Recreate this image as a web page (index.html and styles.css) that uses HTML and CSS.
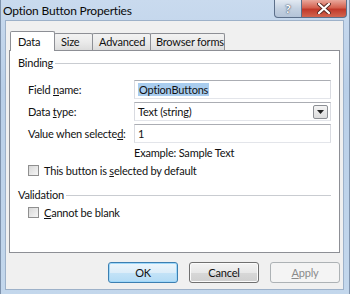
FILE: index.html
```html
<!doctype html>
<html lang="en">
<head>
	<meta charset="UTF-8">
	<title>Option Button Properties</title>
	<link rel="stylesheet" href="styles.css">
</head>
<body>
	<div class="window">
		<div class="titlebar">
			<span class="title">Option Button Properties</span>
			<div class="caption">
				<span class="cap-btn help">?</span>
				<span class="cap-btn close">
					<svg width="14" height="11" viewBox="0 0 14 11">
						<path d="M2 1 L12 10 M12 1 L2 10" stroke="#5a2a24" stroke-width="4" stroke-linecap="round"/>
						<path d="M2 1 L12 10 M12 1 L2 10" stroke="#fff" stroke-width="2.2" stroke-linecap="round"/>
					</svg>
				</span>
			</div>
		</div>
		<div class="client">
			<div class="tabs">
				<span class="tab active">Data</span>
				<span class="tab t-size">Size</span>
				<span class="tab t-adv">Advanced</span>
				<span class="tab t-browser">Browser forms</span>
			</div>
			<div class="panel">
				<div class="group"><span>Binding</span></div>
				<div class="fields">
					<label>Field <u>n</u>ame:</label>
					<div class="input"><span class="sel">OptionButtons</span></div>
					<label>Data <u>t</u>ype:</label>
					<div class="input select">
						<span>Text (string)</span>
						<span class="drop"><svg width="7" height="4" viewBox="0 0 7 4"><path d="M0 0 H7 L3.5 4 Z" fill="#222"/></svg></span>
					</div>
					<label>Value when selecte<u>d</u>:</label>
					<div class="input"><span>1</span></div>
				</div>
				<div class="example">Example: Sample Text</div>
				<div class="check first"><span class="box"></span><span>This button is <u>s</u>elected by default</span></div>
				<div class="group second"><span>Validation</span></div>
				<div class="check last"><span class="box"></span><span><u>C</u>annot be blank</span></div>
			</div>
			<div class="buttons">
				<span class="btn default">OK</span>
				<span class="btn">Cancel</span>
				<span class="btn disabled"><span><u>A</u>pply</span></span>
			</div>
		</div>
	</div>
</body>
</html>
```

FILE: styles.css
```css
* {
	margin: 0;
	padding: 0;
	box-sizing: border-box;
}
body {
	font-family: Lato, "Noto Sans", sans-serif;
	font-size: 11px;
	letter-spacing: -0.2px;
	color: #111;
	background: #bcd2ea;
	white-space: nowrap;
}
u {
	text-decoration: underline;
	text-underline-offset: 1px;
}
.window {
	width: 350px;
	height: 294px;
	background: linear-gradient(#c9daee, #b9cfe8 30%, #c3d7ec);
	border-left: 1px solid #7f93ad;
	border-right: 1px solid #7f93ad;
	padding: 0 5px 4px 4px;
	display: flex;
	flex-direction: column;
}
.titlebar {
	height: 20px;
	display: flex;
	justify-content: space-between;
	align-items: flex-start;
}
.title {
	font-size: 12px;
	color: #0a0a0a;
	margin: 3px 0 0 -2px;
}
.caption {
	display: flex;
	margin-right: -3px;
}
.cap-btn {
	height: 18px;
	display: flex;
	align-items: center;
	justify-content: center;
	border: 1px solid #5c6f8a;
	border-top: none;
}
.help {
	width: 28px;
	border-radius: 0 0 0 4px;
	background: linear-gradient(#e2e9f2, #c4d1e1 50%, #b4c4d8);
	color: #fff;
	font-weight: bold;
	font-size: 12px;
	text-shadow: 0 0 2px #3d4b60, 0 0 1px #3d4b60;
}
.close {
	width: 45px;
	border-left: none;
	border-radius: 0 0 4px 0;
	background: linear-gradient(#e9a89c, #d4614f 45%, #c1392a 55%, #d2654f);
}
.client {
	flex: 1;
	background: #f0f0f0;
	border: 1px solid #9db1c9;
	padding: 10px 3px 0 3px;
}
.tabs {
	display: flex;
	align-items: flex-end;
	height: 19px;
	padding-left: 1px;
	position: relative;
	z-index: 1;
}
.tab {
	height: 17px;
	line-height: 15px;
	padding: 0 0 0 6px;
	border: 1px solid #8d8f95;
	border-bottom: none;
	margin-left: -1px;
	background: linear-gradient(#f2f2f2, #ebebeb 50%, #dcdcdc);
	border-radius: 2px 2px 0 0;
}
.tab.active {
	height: 20px;
	margin-bottom: -1px;
	margin-left: 0;
	width: 45px;
	padding: 2px 0 0 7px;
	background: #fff;
	z-index: 2;
}
.t-size {
	width: 39px;
}
.t-adv {
	width: 59px;
}
.t-browser {
	width: 75px;
	padding-left: 5px;
}
.panel {
	height: 203px;
	background: #fff;
	border: 1px solid #8d8f95;
	padding: 4px 8px 0 8px;
}
.group {
	display: flex;
	align-items: center;
	height: 15px;
}
.group::after {
	content: "";
	flex: 1;
	height: 1px;
	background: #c9ccd1;
	margin: 1px 0 0 2px;
}
.group.second {
	margin-top: 10px;
}
.fields {
	display: grid;
	grid-template-columns: 106px 197px;
	grid-auto-rows: 19px;
	row-gap: 3px;
	margin: 10px 0 0 10px;
	align-items: center;
}
.input {
	height: 19px;
	border: 1px solid #abadb3;
	border-left-color: #d9dbe1;
	border-right-color: #d9dbe1;
	border-bottom-color: #e3e5ea;
	padding: 0 3px;
	display: flex;
	align-items: center;
}
.sel {
	background: #a9cdef;
	padding: 0 1px;
}
.select {
	justify-content: space-between;
	padding-right: 2px;
}
.drop {
	width: 15px;
	height: 14px;
	border: 1px solid #8b8e93;
	border-radius: 2px;
	background: linear-gradient(#f4f4f4, #dcdcdc);
	display: flex;
	align-items: center;
	justify-content: center;
}
.example {
	height: 14px;
	line-height: 14px;
	margin: 3px 0 0 116px;
}
.check {
	display: flex;
	align-items: center;
	height: 14px;
	margin-left: 10px;
	margin-top: 3px;
}
.check.last {
	margin-top: 3px;
}
.box {
	width: 11px;
	height: 11px;
	border: 1px solid #8f8f8f;
	background: linear-gradient(135deg, #d8d8d8, #f6f6f6);
	margin-right: 5px;
}
.buttons {
	display: flex;
	justify-content: flex-end;
	gap: 11px;
	margin-top: 9px;
	padding-right: 0;
}
.btn {
	width: 70px;
	height: 21px;
	border: 1px solid #707070;
	border-radius: 3px;
	background: linear-gradient(#f3f3f3, #e8e8e8 50%, #d8d8d8 51%, #cfcfcf);
	display: flex;
	align-items: center;
	justify-content: center;
	box-shadow: inset 0 0 0 1px #fbfbfb;
}
.btn.default {
	border-color: #3c7fb1;
	background: linear-gradient(#edf6fc, #dcedf9 50%, #c4e3f7 51%, #b3dbf5);
	box-shadow: inset 0 0 0 1px #9fd8fa;
}
.btn.disabled {
	border-color: #adb2b5;
	background: #f4f4f4;
	color: #8a8a8a;
	box-shadow: none;
}
```
